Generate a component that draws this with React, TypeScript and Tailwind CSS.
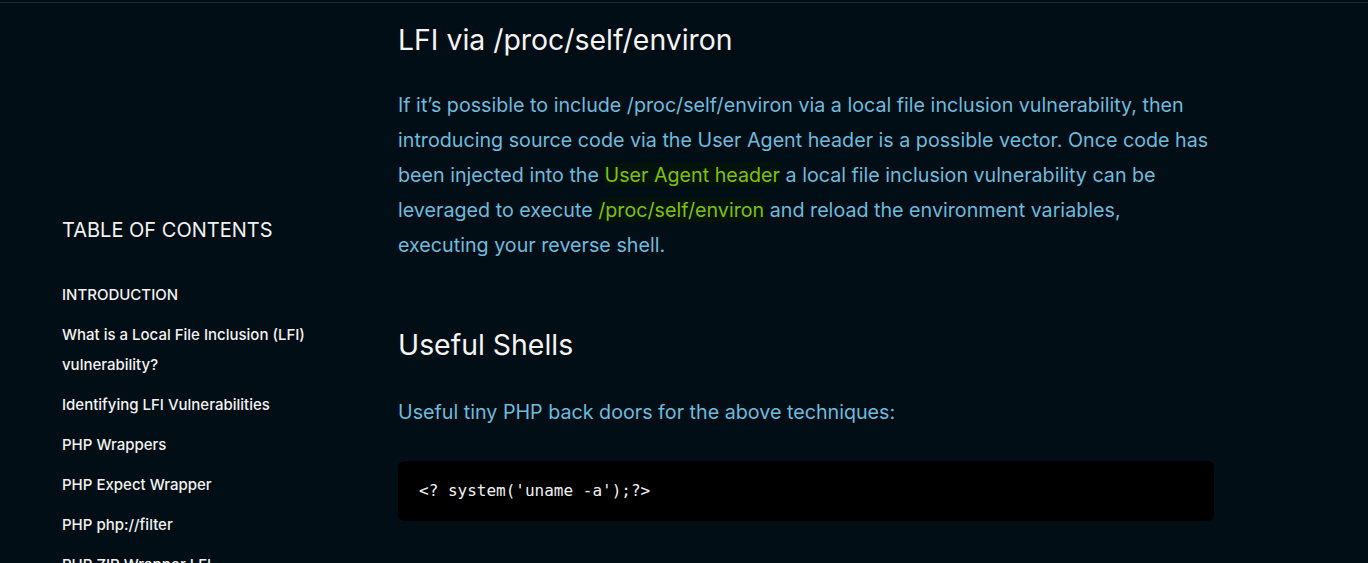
const toc = [
  'INTRODUCTION',
  'What is a Local File Inclusion (LFI) vulnerability?',
  'Identifying LFI Vulnerabilities',
  'PHP Wrappers',
  'PHP Expect Wrapper',
  'PHP php://filter',
  'PHP ZIP Wrapper LFI',
]

function Mark({ children }: { children: React.ReactNode }) {
  return <span className="bg-[#041309] text-[#7fc20c]">{children}</span>
}

export default function App() {
  return (
    <div className="h-[563px] overflow-hidden bg-[#020e15] font-['Inter','Noto_Sans',sans-serif]">
      <div className="h-[3px] border-b border-[#1a2932]" />
      <div className="flex">
        <aside className="ml-[62px] w-[262px] shrink-0 pt-[212px]">
          <h2 className="text-[20px] leading-[30px] text-[#f2f2f2]">TABLE OF CONTENTS</h2>
          <ul className="mt-[35px] flex flex-col gap-[10px]">
            {toc.map((t) => (
              <li key={t} className="text-[15px] font-medium leading-[30px] text-[#f2f2f2]">
                {t}
              </li>
            ))}
          </ul>
        </aside>
        <main className="ml-[74px] w-[816px] pt-[19px]">
          <h1 className="text-[28.4px] leading-[36px] text-[#f4f4f4]">LFI via /proc/self/environ</h1>
          <p className="mt-[30px] text-[19.7px] leading-[35px] text-[#6ebbdf]">
            If it’s possible to include /proc/self/environ via a local file inclusion vulnerability, then
            introducing source code via the User Agent header is a possible vector. Once code has been
            injected into the <Mark>User Agent header</Mark> a local file inclusion vulnerability can be
            leveraged to execute <Mark>/proc/self/environ</Mark> and reload the environment variables,
            executing your reverse shell.
          </p>
          <h2 className="mt-[64px] text-[28.4px] leading-[36px] text-[#f4f4f4]">Useful Shells</h2>
          <p className="mt-[32px] text-[19.7px] leading-[35px] text-[#6ebbdf]">
            Useful tiny PHP back doors for the above techniques:
          </p>
          <pre className="mt-[31px] h-[60px] rounded-[6px] bg-black px-[21px] pt-[19px] font-['DejaVu_Sans_Mono',monospace] text-[16px] leading-[22px] text-[#f2f2f2]">
            {"<? system('uname -a');?>"}
          </pre>
        </main>
      </div>
    </div>
  )
}
